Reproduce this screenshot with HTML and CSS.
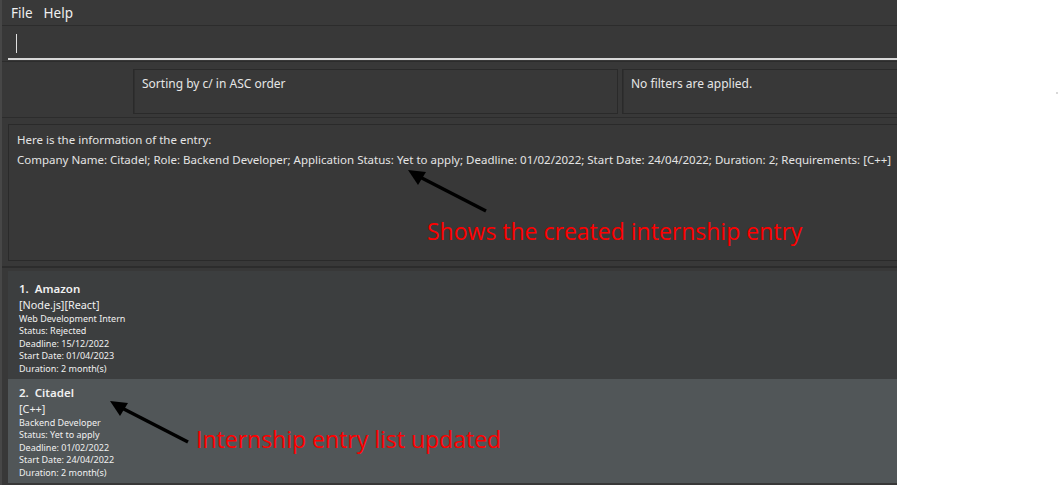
FILE: index.html
```html
<!DOCTYPE html>
<html>
<head>
<meta charset="utf-8">
<link rel="stylesheet" href="styles.css">
</head>
<body>
<div class="page">
  <div class="app">
    <div class="menubar">
      <span class="menu-item">File</span>
      <span class="menu-item">Help</span>
    </div>
    <div class="command">
      <div class="command-field"><span class="cursor"></span></div>
    </div>
    <div class="status-row">
      <div class="status-box sort">Sorting by c/ in ASC order</div>
      <div class="status-box filter">No filters are applied.</div>
    </div>
    <div class="result-wrap">
      <div class="result">
        <p>Here is the information of the entry:</p>
        <p>Company Name: Citadel; Role: Backend Developer; Application Status: Yet to apply; Deadline: 01/02/2022; Start Date: 24/04/2022; Duration: 2; Requirements: [C++]</p>
      </div>
    </div>
    <div class="list">
      <div class="card even">
        <div class="title">1.&nbsp; Amazon</div>
        <div class="tags">[Node.js][React]</div>
        <div class="line">Web Development Intern</div>
        <div class="line">Status: Rejected</div>
        <div class="line">Deadline: 15/12/2022</div>
        <div class="line">Start Date: 01/04/2023</div>
        <div class="line">Duration: 2 month(s)</div>
      </div>
      <div class="card odd">
        <div class="title">2.&nbsp; Citadel</div>
        <div class="tags">[C++]</div>
        <div class="line">Backend Developer</div>
        <div class="line">Status: Yet to apply</div>
        <div class="line">Deadline: 01/02/2022</div>
        <div class="line">Start Date: 24/04/2022</div>
        <div class="line">Duration: 2 month(s)</div>
      </div>
    </div>
  </div>
  <div class="dot"></div>
  <div class="note note-1">Shows the created internship entry</div>
  <div class="note note-2">Internship entry list updated</div>
  <svg class="arrow arrow-1" width="90" height="50" viewBox="0 0 90 50">
    <line x1="82" y1="45" x2="12" y2="9" stroke="#000" stroke-width="3.5"/>
    <polygon points="4,4 22,6 14,19" fill="#000"/>
  </svg>
  <svg class="arrow arrow-2" width="90" height="50" viewBox="0 0 90 50">
    <line x1="82" y1="45" x2="12" y2="9" stroke="#000" stroke-width="3.5"/>
    <polygon points="4,4 22,6 14,19" fill="#000"/>
  </svg>
</div>
</body>
</html>
```
FILE: styles.css
```css
html, body {
  margin: 0;
  padding: 0;
  background: #ffffff;
}
.page {
  position: relative;
  width: 1059px;
  height: 485px;
  overflow: hidden;
  font-family: "Noto Sans", "Open Sans", sans-serif;
}
.app {
  width: 897px;
  height: 485px;
  background: #383838;
  display: flex;
  flex-direction: column;
  box-sizing: border-box;
  border-left: 2px solid #474747;
  overflow: hidden;
}
.menubar {
  height: 26px;
  display: flex;
  align-items: center;
  padding-left: 9px;
  gap: 11px;
  border-bottom: 1px solid #2c2c2c;
  background: #393939;
  box-sizing: border-box;
}
.menu-item {
  color: #f0f0f0;
  font-size: 13.5px;
}
.command {
  height: 36px;
  padding: 0 0 0 6px;
  box-sizing: border-box;
  border-bottom: 1px solid #2c2c2c;
}
.command-field {
  height: 34px;
  border-bottom: 2px solid #d8d8d8;
  box-sizing: border-box;
  display: flex;
  align-items: center;
  padding-left: 8px;
  padding-top: 2px;
}
.cursor {
  width: 1px;
  height: 19px;
  background: #e0e0e0;
}
.status-row {
  height: 56px;
  display: flex;
  gap: 4px;
  padding: 7px 0 3px 131px;
  box-sizing: border-box;
  border-bottom: 1px solid #2c2c2c;
}
.status-box {
  border: 1px solid #2a2a2a;
  box-shadow: inset 1px 0 0 #303030;
  color: #e6e6e6;
  font-size: 12px;
  padding: 5px 8px;
  box-sizing: border-box;
}
.sort {
  width: 485px;
}
.filter {
  flex: 1;
  border-right: none;
}
.result-wrap {
  height: 150px;
  padding: 6px 0 5px 6px;
  box-sizing: border-box;
  border-bottom: 2px solid #2c2c2c;
}
.result {
  height: 100%;
  border: 1px solid #2a2a2a;
  border-right: none;
  box-sizing: border-box;
  padding: 5px 8px;
  color: #e4e4e4;
  font-size: 11.5px;
}
.result p {
  margin: 0 0 1px 0;
  line-height: 19px;
  white-space: nowrap;
}
.list {
  flex: 1;
  padding: 3px 0 0 6px;
  box-sizing: border-box;
  display: flex;
  flex-direction: column;
}
.card {
  padding: 10px 11px 0;
  box-sizing: border-box;
  color: #f0f0f0;
}
.card.even {
  height: 108px;
  background: #3c3e3f;
}
.card.odd {
  height: 104px;
  padding-top: 6px;
  background: #515658;
}
.title {
  font-size: 11.5px;
  font-weight: 600;
  line-height: 15px;
  margin-bottom: 1px;
}
.tags {
  font-size: 10.8px;
  line-height: 16px;
  margin-bottom: 0;
}
.line {
  font-size: 9px;
  line-height: 12.4px;
}
.dot {
  position: absolute;
  left: 1056px;
  top: 92px;
  width: 2px;
  height: 2px;
  background: #d8d8d8;
}
.note {
  position: absolute;
  color: #ff0000;
  font-family: "Open Sans", sans-serif;
  font-size: 23px;
  line-height: 28px;
  white-space: nowrap;
}
.note-1 {
  left: 427px;
  top: 217px;
}
.note-2 {
  left: 196px;
  top: 425px;
}
.arrow {
  position: absolute;
}
.arrow-1 {
  left: 404px;
  top: 166px;
}
.arrow-2 {
  left: 106px;
  top: 397px;
}
```
